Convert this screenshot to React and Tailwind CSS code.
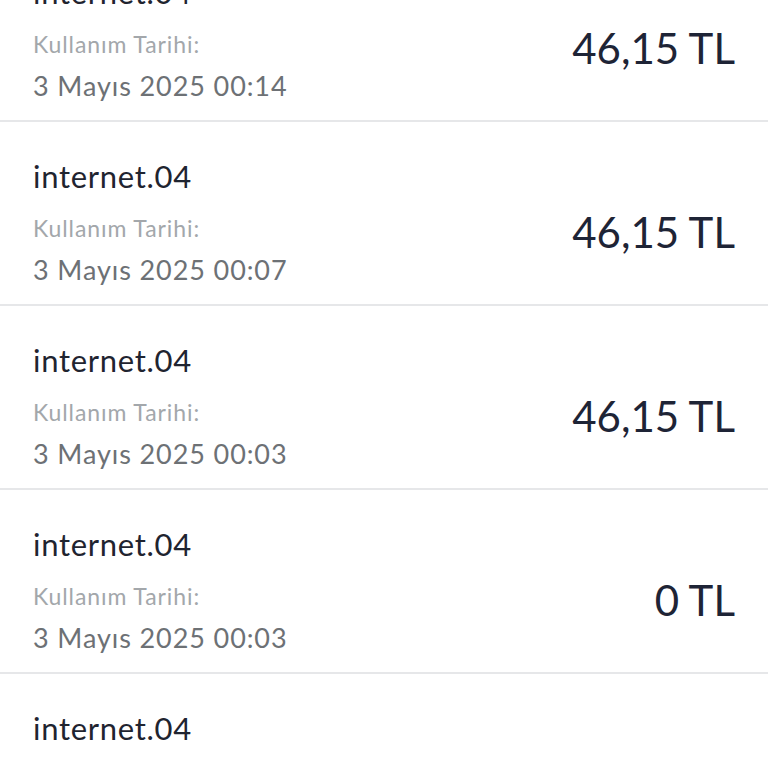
const usages = [
  { name: "internet.04", date: "3 Mayıs 2025 00:14", amount: "46,15 TL" },
  { name: "internet.04", date: "3 Mayıs 2025 00:07", amount: "46,15 TL" },
  { name: "internet.04", date: "3 Mayıs 2025 00:03", amount: "46,15 TL" },
  { name: "internet.04", date: "3 Mayıs 2025 00:03", amount: "0 TL" },
  { name: "internet.04", date: "3 Mayıs 2025 00:01", amount: "46,15 TL" },
];

export default function App() {
  return (
    <div
      className="h-[768px] w-[768px] overflow-hidden bg-white"
      style={{ fontFamily: "Lato, 'Open Sans', sans-serif" }}
    >
      {/* list is scrolled, first row partly above the top */}
      <div className="-mt-[62px]">
        {usages.map((u, i) => (
          <UsageRow key={i} item={u} />
        ))}
      </div>
    </div>
  );
}

/* ===============================
   USAGE ROW
================================= */
function UsageRow({ item }) {
  return (
    <div className="flex h-[184px] items-center justify-between border-b-2 border-[#e6e7e9] pl-[33px] pr-[33px]">
      <div className="flex flex-col pt-[15px]">
        <p className="text-[31px] leading-[40px] tracking-[0.7px] text-[#1f2430]">
          {item.name}
        </p>
        <p className="mt-[17px] text-[23px] leading-[30px] tracking-[0.9px] text-[#a3a7ab]">
          Kullanım Tarihi:
        </p>
        <p className="mt-[11px] text-[27px] leading-[32px] tracking-[0.9px] text-[#6d7175]">
          {item.date}
        </p>
      </div>
      <p className="pt-[38px] text-[42px] leading-[48px] text-[#1e2436]">
        {item.amount}
      </p>
    </div>
  );
}
